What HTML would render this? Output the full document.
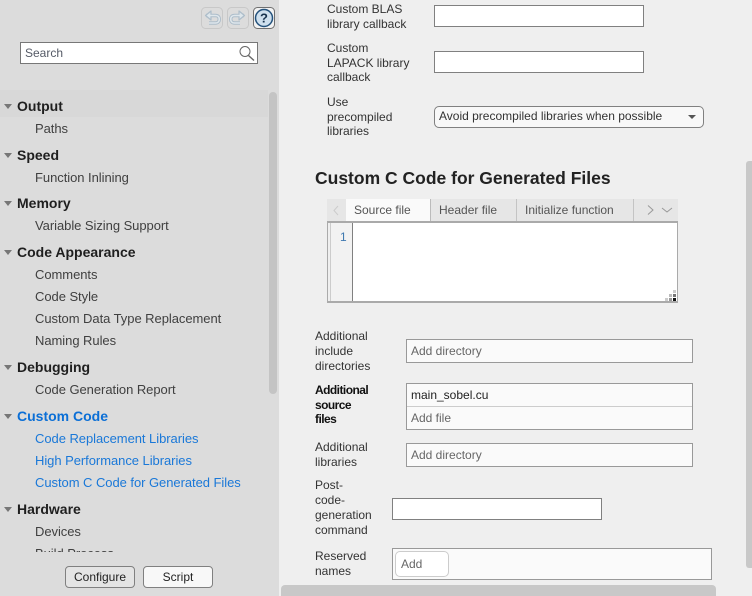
<!DOCTYPE html>
<html><head><meta charset="utf-8"><style>
html,body{margin:0;padding:0;width:752px;height:596px;overflow:hidden;background:#efefef;font-family:"Liberation Sans",Arial,sans-serif;font-size:12px;color:#333}
div,span{position:absolute;box-sizing:border-box;white-space:nowrap}
.h{left:17px;font-weight:bold;color:#1f1f1f;line-height:16px;font-family:"Liberation Sans",sans-serif;font-size:14px}
.i{left:35px;font-size:13px;line-height:16px;color:#404040;letter-spacing:-.05px}
.t{width:0;height:0;left:4px;border-left:4px solid transparent;border-right:4px solid transparent;border-top:5px solid #777}
.l{left:327px;line-height:14.6px;color:#333;font-size:12px}
.l2{left:315px;line-height:15px;color:#333;font-size:12px}
.in{background:#fff;border:1px solid #808080}
.ph{color:#666;font-size:12px}
</style></head><body>
<div style="left:0;top:0;width:279px;height:596px;background:#dcdcdc"></div>
<div style="left:0;top:90px;width:268px;height:27px;background:#d8d8d8"></div>

<svg style="position:absolute;left:201px;top:7px" width="76" height="23" viewBox="0 0 76 23">
<rect x=".5" y=".5" width="21" height="21" rx="4" fill="#dcdcdc" stroke="#c8c8c8"/>
<rect x="26.500" y=".5" width="21" height="21" rx="4" fill="#dcdcdc" stroke="#c8c8c8"/>
<rect x="52.500" y=".5" width="21" height="21" rx="4" fill="#f2f2f2" stroke="#707070"/>
<g fill="none" stroke-linejoin="round">
<path d="M5 8.500h9.500c2.500 0 3.800 1.700 3.800 3.700s-1.300 3.800-3.800 3.800H8" stroke="#adbdca" stroke-width="3.500"/>
<path d="M10 4 4.500 8.500 10 13z" fill="#dbe4ea" stroke="#adbdca" stroke-width="1.200"/>
<path d="M7 8.500h7.500c2.500 0 3.800 1.700 3.800 3.700s-1.300 3.800-3.800 3.800H8" stroke="#dfe7ec" stroke-width="1.600"/>
<path d="M43 8.500h-9.500c-2.500 0-3.800 1.700-3.800 3.700s1.300 3.800 3.800 3.800H39" stroke="#adbdca" stroke-width="3.500"/>
<path d="M38 4l5.500 4.500L38 13z" fill="#dbe4ea" stroke="#adbdca" stroke-width="1.200"/>
<path d="M41 8.500h-7.500c-2.500 0-3.800 1.700-3.800 3.700s1.300 3.800 3.800 3.800H39" stroke="#dfe7ec" stroke-width="1.600"/>
</g>
<circle cx="63" cy="11" r="8.500" fill="#cfe0ee" stroke="#24527c" stroke-width="1.500"/>
<text x="63" y="15.500" text-anchor="middle" font-family="Liberation Sans" font-weight="bold" font-size="13" fill="#17324d">?</text>
</svg>

<div class="in" style="left:20px;top:42px;width:238px;height:22px;border-color:#777"></div>
<div style="left:25px;top:46px;font-size:12px;line-height:15px;color:#555a66">Search</div>
<svg style="position:absolute;left:238px;top:45px" width="18" height="18" viewBox="0 0 18 18"><circle cx="7" cy="6.500" r="5" fill="none" stroke="#666" stroke-width="1"/><path d="M10.500 10.500l5.500 5" stroke="#666" stroke-width="1.400"/></svg>

<div class="t" style="top:104px"></div><div class="h" style="top:98px">Output</div>
<div class="i" style="top:121px">Paths</div>
<div class="t" style="top:153px"></div><div class="h" style="top:147px">Speed</div>
<div class="i" style="top:170px">Function Inlining</div>
<div class="t" style="top:201px"></div><div class="h" style="top:195px">Memory</div>
<div class="i" style="top:218px">Variable Sizing Support</div>
<div class="t" style="top:250px"></div><div class="h" style="top:244px">Code Appearance</div>
<div class="i" style="top:267px">Comments</div>
<div class="i" style="top:289px">Code Style</div>
<div class="i" style="top:311px">Custom Data Type Replacement</div>
<div class="i" style="top:333px">Naming Rules</div>
<div class="t" style="top:365px"></div><div class="h" style="top:359px">Debugging</div>
<div class="i" style="top:382px">Code Generation Report</div>
<div class="t" style="top:414px"></div><div class="h" style="top:408px;color:#0b6fd6">Custom Code</div>
<div class="i" style="top:431px;color:#1a78d8">Code Replacement Libraries</div>
<div class="i" style="top:453px;color:#1a78d8">High Performance Libraries</div>
<div class="i" style="top:475px;color:#1a78d8">Custom C Code for Generated Files</div>
<div class="t" style="top:507px"></div><div class="h" style="top:501px">Hardware</div>
<div class="i" style="top:524px">Devices</div>
<div style="left:0;top:546px;width:268px;height:6px;overflow:hidden"><div class="i" style="top:0">Build Process</div></div>
<div style="left:269px;top:92px;width:8px;height:302px;background:#c4c4c4;border-radius:4px"></div>

<div style="left:65px;top:566px;width:70px;height:22px;border:1px solid #808080;border-radius:4px;background:#e4e4e4;text-align:center;line-height:20px;color:#222">Configure</div>
<div style="left:143px;top:566px;width:70px;height:22px;border:1px solid #808080;border-radius:4px;background:#f8f8f8;text-align:center;line-height:20px;color:#222">Script</div>

<div class="l" style="top:2px">Custom BLAS<br>library callback</div>
<div class="in" style="left:434px;top:5px;width:210px;height:22px"></div>
<div class="l" style="top:41px">Custom<br>LAPACK library<br>callback</div>
<div class="in" style="left:434px;top:51px;width:210px;height:22px"></div>
<div class="l" style="top:95px">Use<br>precompiled<br>libraries</div>
<div style="left:434px;top:106px;width:270px;height:22px;border:1px solid #808080;border-radius:5px;background:#f8f8f8"></div>
<div style="left:439px;top:109px;line-height:15px;color:#333">Avoid precompiled libraries when possible</div>
<div style="left:688px;top:115px;width:0;height:0;border-left:4px solid transparent;border-right:4px solid transparent;border-top:4px solid #555"></div>

<div style="left:315px;top:167px;font-size:17.5px;font-weight:bold;line-height:22px;color:#222">Custom C Code for Generated Files</div>

<div style="left:327px;top:199px;width:351px;height:22px;background:#e6e6e6"></div>
<div style="left:346px;top:199px;width:85px;height:23px;background:#fafafa;border-right:1px solid #bbb"></div>
<div style="left:431px;top:199px;width:86px;height:22px;border-right:1px solid #c4c4c4"></div>
<div style="left:517px;top:199px;width:117px;height:22px;border-right:1px solid #c4c4c4"></div>
<div style="left:354px;top:203px;line-height:15px;color:#555">Source file</div>
<div style="left:439px;top:203px;line-height:15px;color:#555">Header file</div>
<div style="left:525px;top:203px;line-height:15px;color:#555">Initialize function</div>
<svg style="position:absolute;left:328px;top:200px" width="352" height="22" viewBox="0 0 352 22"><path d="M10 6 6 10.500l4 4.500" fill="none" stroke="#ccc"/><path d="M320 5.500l5 4.500-5 4.500" fill="none" stroke="#999"/><path d="M334 8l5 4 5-4" fill="none" stroke="#999"/></svg>

<div style="left:327px;top:221px;width:351px;height:82px;background:#fff;border:1px solid #aaa;border-top:2px solid #aaa;border-bottom:2px solid #aaa"></div>
<div style="left:328px;top:223px;width:2px;height:78px;background:#efefef"></div>
<div style="left:330px;top:223px;width:23px;height:78px;background:#f2f2f2;border-left:1px solid #ccc;border-right:1px solid #808080"></div>
<div style="left:340px;top:230px;font-size:12px;line-height:14px;color:#3f78b0">1</div>
<svg style="position:absolute;left:665px;top:290px" width="13" height="12"><rect x="8" y="0" width="3" height="3" fill="#ccc"/><rect x="4" y="4" width="3" height="3" fill="#bbb"/><rect x="8" y="4" width="3" height="3" fill="#777"/><rect x="0" y="8" width="3" height="3" fill="#ccc"/><rect x="4" y="8" width="3" height="3" fill="#999"/><rect x="8" y="8" width="3" height="3" fill="#111"/></svg>

<div class="l2" style="top:329px">Additional<br>include<br>directories</div>
<div style="left:406px;top:339px;width:287px;height:24px;background:#fafafa;border:1px solid #999"></div>
<div class="ph" style="left:411px;top:344px;line-height:14px">Add directory</div>
<div class="l2" style="top:383px;color:#111;font-weight:bold;letter-spacing:-.55px;line-height:14.500px">Additional<br>source<br>files</div>
<div style="left:406px;top:383px;width:287px;height:47px;background:#fafafa;border:1px solid #999"></div>
<div style="left:407px;top:406px;width:285px;height:1px;background:#ccc"></div>
<div style="left:411px;top:388px;line-height:14px;color:#222">main_sobel.cu</div>
<div class="ph" style="left:411px;top:411px;line-height:14px">Add file</div>
<div class="l2" style="top:440px">Additional<br>libraries</div>
<div style="left:406px;top:443px;width:287px;height:24px;background:#fafafa;border:1px solid #999"></div>
<div class="ph" style="left:411px;top:448px;line-height:14px">Add directory</div>
<div class="l2" style="top:478px">Post-<br>code-<br>generation<br>command</div>
<div class="in" style="left:392px;top:498px;width:210px;height:22px"></div>
<div class="l2" style="top:549px">Reserved<br>names</div>
<div style="left:392px;top:548px;width:320px;height:32px;background:#fafafa;border:1px solid #999"></div>
<div style="left:395px;top:551px;width:54px;height:26px;background:#fff;border:1px solid #ccc;border-radius:5px"></div>
<div class="ph" style="left:401px;top:557px;line-height:14px">Add</div>

<div style="left:746px;top:161px;width:6px;height:407px;background:#c8c8c8;border-radius:3px 0 0 3px"></div>
<div style="left:281px;top:585px;width:435px;height:11px;background:#c8c8c8;border-radius:4px 4px 0 0"></div>
</body></html>
